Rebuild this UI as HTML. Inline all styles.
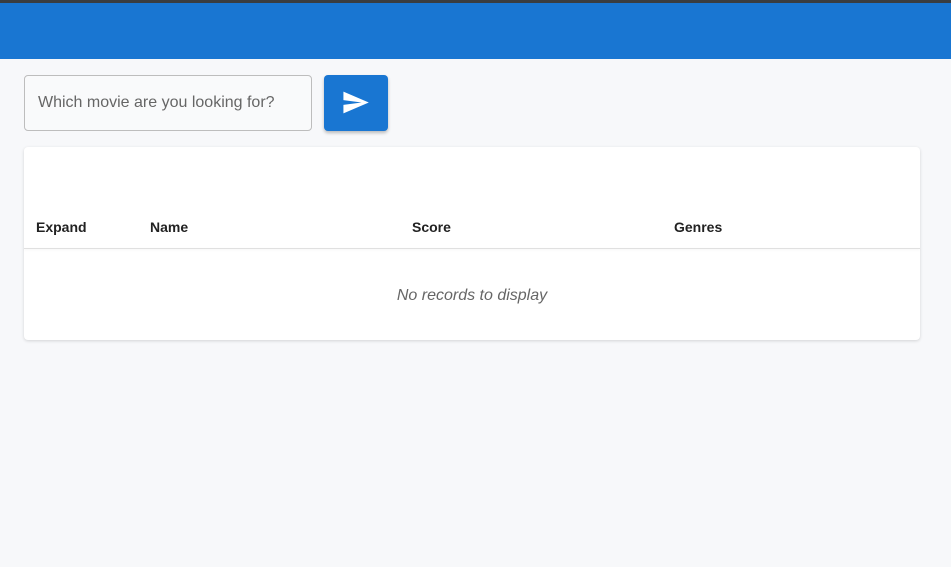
<!DOCTYPE html>
<html><head><style>
body{margin:0;width:951px;height:567px;background:#f7f8fa;font-family:"Liberation Sans",Arial,sans-serif;position:relative;overflow:hidden}
.top{position:absolute;left:0;top:0;width:951px;height:3px;background:#3a3d40}
.bar{position:absolute;left:0;top:3px;width:951px;height:56px;background:#1976d2}
.inp{position:absolute;left:24px;top:75px;border:1px solid #bdbdbd;border-radius:4px;background:#f9fafb;box-sizing:border-box;width:288px;height:56px}
.inp span{position:absolute;left:13px;top:18px;font-size:16px;color:#666}
.btn{position:absolute;left:324px;top:75px;width:64px;height:56px;background:#1976d2;border-radius:4px;box-shadow:0 2px 3px rgba(0,0,0,.25)}
.card{position:absolute;left:24px;top:147px;width:896px;height:193px;background:#fff;border-radius:4px;box-shadow:0 1px 3px rgba(0,0,0,.15)}
.h{position:absolute;top:72px;font-size:14px;font-weight:bold;color:#222}
.line{position:absolute;left:0;top:101px;width:896px;height:1px;background:#e0e0e0;box-shadow:0 1px 2px rgba(0,0,0,.06)}
.nr{position:absolute;left:0;width:896px;top:140px;text-align:center;font-style:italic;font-size:16px;color:#666}
</style></head><body>
<div class="top"></div><div class="bar"></div>
<div class="inp"><span>Which movie are you looking for?</span></div>
<div class="btn"><svg style="position:absolute;left:17px;top:13px" width="29" height="29" viewBox="0 0 24 24"><path d="M2.01 21L23 12 2.01 3 2 10l15 2-15 2z" fill="#fff"/></svg></div>
<div class="card">
<div class="h" style="left:12px">Expand</div>
<div class="h" style="left:126px">Name</div>
<div class="h" style="left:388px">Score</div>
<div class="h" style="left:650px">Genres</div>
<div class="line"></div>
<div class="nr">No records to display</div>
</div>
</body></html>
